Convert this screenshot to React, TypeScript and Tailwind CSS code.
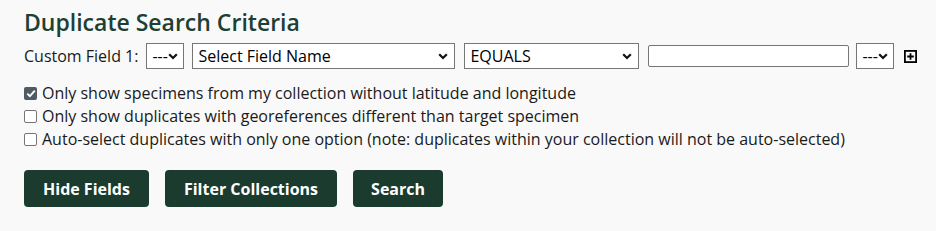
import React from 'react';

const FONT = { fontFamily: '"Open Sans", "Noto Sans", sans-serif' };

function Chevron() {
  return (
    <svg width="10" height="7" viewBox="0 0 10 7" className="shrink-0">
      <path d="M1.2 1.2 L5 5 L8.8 1.2" fill="none" stroke="#111" strokeWidth="2.2" />
    </svg>
  );
}

function FakeSelect({ label, width }: { label: string; width: string }) {
  return (
    <div
      className={`${width} shrink-0 h-[26px] flex items-center justify-between bg-white border border-[#767676] pl-[5px] pr-[6px] text-[16px] text-black`}
    >
      <span className="leading-none whitespace-nowrap">{label}</span>
      <Chevron />
    </div>
  );
}

function Check({ checked, label }: { checked?: boolean; label: string }) {
  return (
    <label className="flex items-center gap-[5px]">
      {checked ? (
        <span className="w-[13px] h-[13px] rounded-[2px] bg-[#4f5a65] flex items-center justify-center">
          <svg width="10" height="9" viewBox="0 0 10 9">
            <path d="M1.3 4.6 L3.9 7.1 L8.8 1.6" fill="none" stroke="#fff" strokeWidth="1.9" />
          </svg>
        </span>
      ) : (
        <span className="w-[13px] h-[13px] rounded-[2px] bg-white border border-[#767676]" />
      )}
      <span>{label}</span>
    </label>
  );
}

export default function App() {
  return (
    <div className="w-[936px] h-[231px] bg-[#f9f9f9] px-6 text-[#1a1a1a]" style={FONT}>
      <h2 className="pt-2 text-[23px] leading-[28px] font-semibold text-[#1d4033]">Duplicate Search Criteria</h2>

      {/* Custom field row */}
      <div className="mt-[6px] h-[28px] flex items-center text-[16px] leading-6 whitespace-nowrap">
        <span className="mr-[8px] shrink-0">Custom Field 1:</span>
        <FakeSelect label="---" width="w-[38px]" />
        <div className="w-[8px] shrink-0" />
        <FakeSelect label="Select Field Name" width="w-[263px]" />
        <div className="w-[9px] shrink-0" />
        <FakeSelect label="EQUALS" width="w-[175px]" />
        <div className="w-[9px] shrink-0" />
        <div className="w-[201px] shrink-0 h-[22px] bg-white border border-[#767676] rounded-[2px]" />
        <div className="w-[7px] shrink-0" />
        <FakeSelect label="---" width="w-[38px]" />
        <div className="w-[10px] shrink-0" />
        <svg width="13" height="13" viewBox="0 0 13 13" className="shrink-0">
          <rect x="0.9" y="0.9" width="11.2" height="11.2" fill="none" stroke="#000" strokeWidth="1.8" />
          <path d="M6.5 3.2 V9.8 M3.2 6.5 H9.8" stroke="#000" strokeWidth="1.8" />
        </svg>
      </div>

      {/* Options */}
      <div className="mt-[12px] flex flex-col text-[16px] leading-[23px]">
        <Check checked label="Only show specimens from my collection without latitude and longitude" />
        <Check label="Only show duplicates with georeferences different than target specimen" />
        <Check label="Auto-select duplicates with only one option (note: duplicates within your collection will not be auto-selected)" />
      </div>

      {/* Actions */}
      <div className="mt-[19px] flex gap-4">
        <button className="h-[37px] px-[19px] rounded-[4px] bg-[#1b3b2f] text-white font-bold text-[16px]">Hide Fields</button>
        <button className="h-[37px] px-[19px] rounded-[4px] bg-[#1b3b2f] text-white font-bold text-[16px]">Filter Collections</button>
        <button className="h-[37px] px-[18px] rounded-[4px] bg-[#1b3b2f] text-white font-bold text-[16px]">Search</button>
      </div>
    </div>
  );
}
